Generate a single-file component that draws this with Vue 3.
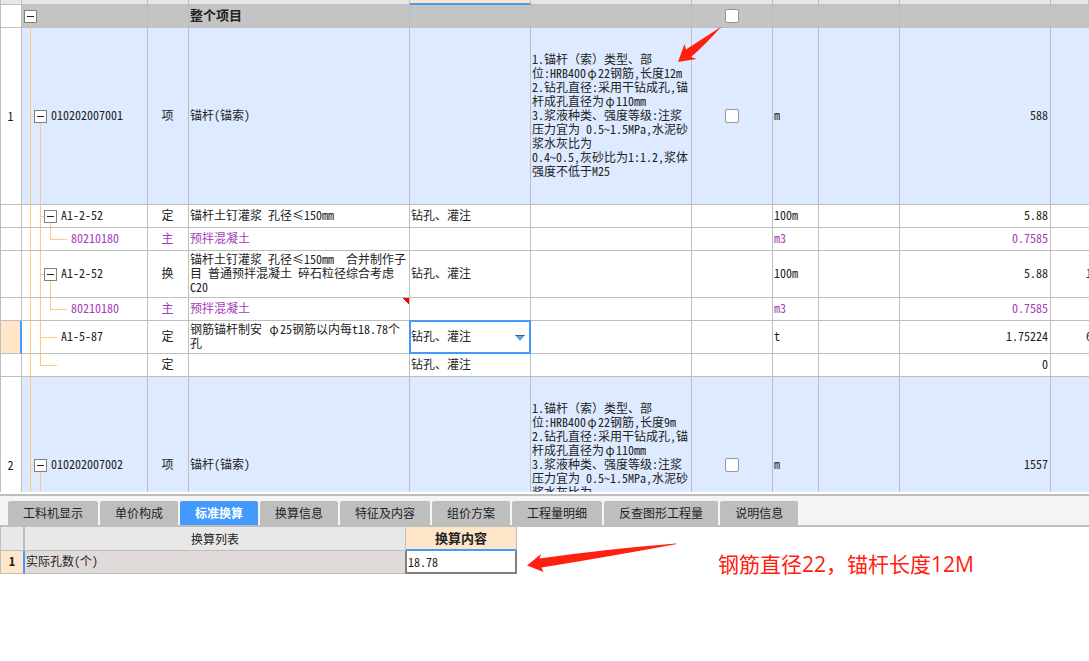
<script setup>
import { ref } from 'vue'

const spec = (length) => [
  '1.锚杆（索）类型、部',
  `位:HRB400φ22钢筋,长度${length}m`,
  '2.钻孔直径:采用干钻成孔,锚',
  '杆成孔直径为φ110mm',
  '3.浆液种类、强度等级:注浆',
  '压力宜为 0.5~1.5MPa,水泥砂',
  '浆水灰比为',
  '0.4~0.5,灰砂比为1:1.2,浆体',
  '强度不低于M25'
].join('\n')

const rows = [
  { kind: 'root', toggle: true, name: '整个项目', check: true },
  { kind: 'item', index: '1', toggle: true, code: '010202007001', type: '项', name: '锚杆(锚索)', desc: spec(12), check: true, unit: 'm', qty: '588' },
  { kind: 'group', toggle: true, code: 'A1-2-52', type: '定', name: '锚杆土钉灌浆 孔径≤150mm', work: '钻孔、灌注', unit: '100m', qty: '5.88' },
  { kind: 'sub', code: '80210180', type: '主', name: '预拌混凝土', unit: 'm3', qty: '0.7585' },
  { kind: 'group', toggle: true, code: 'A1-2-52', type: '换', name: '锚杆土钉灌浆 孔径≤150mm  合并制作子\n目 普通预拌混凝土 碎石粒径综合考虑\nC20', work: '钻孔、灌注', unit: '100m', qty: '5.88', extra: '1' },
  { kind: 'sub', code: '80210180', type: '主', name: '预拌混凝土', unit: 'm3', qty: '0.7585', flag: true },
  { kind: 'leaf', code: 'A1-5-87', type: '定', name: '钢筋锚杆制安 φ25钢筋以内每t18.78个\n孔', edit: true, unit: 't', qty: '1.75224', extra: '6' },
  { kind: 'leaf end', code: '', type: '定', name: '', work: '钻孔、灌注', qty: '0' },
  { kind: 'item', index: '2', toggle: true, code: '010202007002', type: '项', name: '锚杆(锚索)', desc: spec(9), check: true, unit: 'm', qty: '1557' }
]

// The diameter sign takes a full character cell, so it is set apart from the half-width text.
const parts = (text) => (text || '').split(/(φ)/)

const tabs = ['工料机显示', '单价构成', '标准换算', '换算信息', '特征及内容', '组价方案', '工程量明细', '反查图形工程量', '说明信息']
const active = ref('标准换算')
const work = ref('钻孔、灌注')
const holes = ref('18.78')
</script>

<template>
  <main class="app">
    <section class="list">
      <table class="grid">
        <colgroup>
          <col class="c-index"><col class="c-code"><col class="c-type"><col class="c-name"><col class="c-work">
          <col class="c-desc"><col class="c-check"><col class="c-unit"><col class="c-expr"><col class="c-qty"><col>
        </colgroup>
        <thead>
          <tr>
            <th v-for="n in 11" :key="n" :class="{ current: n === 5 }"></th>
          </tr>
        </thead>
        <tbody>
          <tr v-for="(row, i) in rows" :key="i" :class="row.kind">
            <td class="index" :class="{ marked: row.edit }">{{ row.index }}</td>
            <td class="code">
              <div class="node">
                <button v-if="row.toggle" type="button" class="toggle" aria-label="折叠">
                  <svg viewBox="0 0 11 11" width="11" height="11"><path d="M2 5h7v1H2z" fill="#222" /></svg>
                </button>
                <span class="code-text">{{ row.code }}</span>
              </div>
            </td>
            <td class="type">{{ row.type }}</td>
            <td class="name" :class="{ flagged: row.flag }"><span v-for="(part, p) in parts(row.name)" :key="p" :class="{ wide: part === 'φ' }">{{ part }}</span></td>
            <td class="work">
              <template v-if="row.edit">
                <select v-model="work" class="picker" aria-label="工作内容">
                  <option>钻孔、灌注</option>
                </select>
                <svg class="caret" viewBox="0 0 10 6" width="10" height="6">
                  <path d="M0 0h10L5 6z" fill="#5fa6dc" /><path d="M0 0h10L9 1H1z" fill="#2b6597" />
                </svg>
              </template>
              <template v-else>{{ row.work }}</template>
            </td>
            <td class="desc"><span v-for="(part, p) in parts(row.desc)" :key="p" :class="{ wide: part === 'φ' }">{{ part }}</span></td>
            <td class="check"><input v-if="row.check" type="checkbox" aria-label="选择"></td>
            <td>{{ row.unit }}</td>
            <td></td>
            <td class="qty">{{ row.qty }}</td>
            <td class="extra">{{ row.extra }}</td>
          </tr>
        </tbody>
      </table>
      <svg class="arrow first" viewBox="0 0 46 38" width="46" height="38">
        <path d="M44.5 0.5L9 23.5L7.5 18L1 36L19.5 33L14 31Q26 21 44.5 0.5Z" fill="#ff2010" />
      </svg>
    </section>

    <section class="detail">
      <nav class="tabs" role="tablist">
        <button
          v-for="tab in tabs" :key="tab" type="button" role="tab"
          :class="{ active: tab === active }" :aria-selected="tab === active"
          @click="active = tab"
        >{{ tab }}</button>
      </nav>
      <div class="panel">
        <table class="convert">
          <colgroup><col class="v-index"><col class="v-list"><col class="v-value"></colgroup>
          <thead>
            <tr><th></th><th>换算列表</th><th class="current">换算内容</th></tr>
          </thead>
          <tbody>
            <tr>
              <td class="number">1</td>
              <td class="label"><label for="holes">实际孔数(个)</label></td>
              <td class="value"><input id="holes" v-model="holes" type="text"></td>
            </tr>
          </tbody>
        </table>
        <svg class="arrow second" viewBox="0 0 150 30" width="150" height="30">
          <path d="M150 1L149 0.5Q80 6 12.5 15.5L14 11L0 22.5L16.5 29L14.5 24.5Q80 14 150 1Z" fill="#ff2010" />
        </svg>
        <p class="note">钢筋直径22，锚杆长度12M</p>
      </div>
    </section>
  </main>
</template>

<style>
body {
  margin: 0;
  background: #fff;
}
</style>

<style scoped>
.app {
  display: flex;
  flex-direction: column;
  height: 100vh;
  overflow: hidden;
  color: #222;
  font: 12px/14px "Noto Sans Mono CJK SC", "Liberation Mono", "Noto Sans CJK SC", monospace;
}
button, input, select {
  box-sizing: border-box;
  margin: 0;
  padding: 0;
  font: inherit;
  color: inherit;
}
table {
  border-collapse: separate;
  border-spacing: 0;
  table-layout: fixed;
}
.list {
  position: relative;
  flex: 1;
  min-height: 0;
  overflow: hidden;
}
.grid {
  width: 100%;
  border-left: 1px solid #bebebe;
}
.c-index { width: 21px; }
.c-code { width: 126px; }
.c-type { width: 41px; }
.c-name { width: 221px; }
.c-work { width: 121px; }
.c-desc { width: 161px; }
.c-check { width: 81px; }
.c-unit { width: 46px; }
.c-expr { width: 81px; }
.c-qty { width: 151px; }
.grid th {
  height: 4px;
  padding: 0;
  background: #e7e7e7;
  border-right: 1px solid #bebebe;
  border-bottom: 1px solid #bebebe;
}
.grid th.current {
  height: 3px;
  background: #ffe6c8;
  border-bottom: 2px solid #4499ff;
}
.grid td {
  box-sizing: border-box;
  height: 23px;
  padding: 1px 2px 3px 1px;
  border-right: 1px solid #bebebe;
  border-bottom: 1px solid #bebebe;
  white-space: pre;
  vertical-align: middle;
}
.wide {
  display: inline-block;
  width: 12px;
  text-align: center;
}
.grid .root td { background-color: #c4c4c4; }
.grid .item td { background-color: #deeaff; }
.grid td.index, .grid .root td.index {
  padding: 2px 1px 2px 0;
  text-align: center;
  background-color: #fff;
}
.grid td.marked {
  background-color: #ffe6c8;
  border-right: 2px solid #4499ff;
}
.grid .item .desc { padding: 24px 1px 26px; }
.grid .type, .grid .check { text-align: center; }
.grid td.check { padding: 2px; }
.grid .qty { text-align: right; }
.grid .extra {
  padding-left: 35px;
  border-right: 0;
  overflow: hidden;
}
.root .name {
  font-size: 13px;
  font-weight: 700;
}
.sub { color: #a63db8; }
.flagged {
  background: linear-gradient(to bottom left, #f00 50%, transparent 50%) right top / 7px 6px no-repeat;
}

/* Tree guides */
.grid .code {
  --g: linear-gradient(#ffca80, #ffca80);
  padding: 0;
  background-repeat: no-repeat;
}
.root .code {
  background-image: var(--g);
  background-position: 8px 100%;
  background-size: 1px 50%;
}
.item .code {
  background-image: var(--g), var(--g), var(--g);
  background-position: 8px 0, 8px 50%, 18px 100%;
  background-size: 1px 100%, 4px 1px, 1px 50%;
}
.group .code {
  background-image: var(--g), var(--g), var(--g), var(--g);
  background-position: 8px 0, 18px 0, 18px 50%, 28px 100%;
  background-size: 1px 100%, 1px 100%, 4px 1px, 1px 50%;
}
.sub .code {
  background-image: var(--g), var(--g), var(--g), var(--g);
  background-position: 8px 0, 18px 0, 28px 0, 28px 50%;
  background-size: 1px 100%, 1px 100%, 1px 50%, 17px 1px;
}
.leaf .code {
  background-image: var(--g), var(--g), var(--g);
  background-position: 8px 0, 18px 0, 18px 50%;
  background-size: 1px 100%, 1px 100%, 17px 1px;
}
.leaf.end .code { background-size: 1px 100%, 1px 50%, 17px 1px; }
.node {
  display: flex;
  align-items: center;
  gap: 4px;
}
.code-text { padding-bottom: 2px; }
.root .node { padding-left: 2px; }
.item .node { padding-left: 12px; }
.group .node { padding-left: 22px; }
.leaf .node { padding-left: 39px; }
.sub .node { padding-left: 49px; }
.toggle {
  display: flex;
  width: 13px;
  height: 13px;
  border: 1px solid #808080;
  background: #fff;
}
.check input {
  display: block;
  width: 14px;
  height: 14px;
  margin: 0 auto;
  appearance: none;
  background: #fff;
  border: 1px solid #979797;
  border-radius: 2px;
}
.work { position: relative; }
.picker {
  position: absolute;
  inset: -1px;
  width: calc(100% + 2px);
  height: calc(100% + 2px);
  padding-bottom: 2px;
  appearance: none;
  background: #fff;
  border: 2px solid #4499ff;
  border-radius: 0;
}
.caret {
  position: absolute;
  right: 5px;
  top: 14px;
  pointer-events: none;
}
.arrow {
  position: absolute;
  pointer-events: none;
}
.first {
  left: 677px;
  top: 26px;
}

.detail {
  flex: 0 0 167px;
  margin-top: 2px;
  border-top: 2px solid #bebebe;
  box-sizing: border-box;
}
.tabs {
  display: flex;
  gap: 2px;
  padding: 5px 8px 0;
  background: #f4f4f4;
  border-bottom: 2px solid #bebebe;
}
.tabs button {
  height: 24px;
  padding: 0 15px;
  border: 0;
  border-radius: 2px 2px 0 0;
  background: #bebebe;
  font-family: "Noto Sans CJK SC", sans-serif;
  white-space: nowrap;
}
.tabs .active {
  background: #4499ff;
  color: #fff;
  font-weight: 700;
}
.panel { position: relative; }
.convert {
  width: 517px;
  border-left: 1px solid #bebebe;
}
.v-index { width: 24px; }
.v-list { width: 381px; }
.v-value { width: 111px; }
.convert th {
  box-sizing: border-box;
  height: 24px;
  padding: 0;
  background: #e8e8e8;
  border-right: 1px solid #bebebe;
  border-bottom: 1px solid #bebebe;
  font-weight: 400;
}
.convert th:first-child { border-right-width: 2px; }
.convert th.current {
  background: #ffe6c8;
  border-bottom: 2px solid #4499ff;
  font-size: 13px;
  font-weight: 700;
}
.convert td {
  box-sizing: border-box;
  height: 23px;
  padding: 0 0 2px;
  border-bottom: 1px solid #bebebe;
}
.convert .number {
  background: #ffe6c8;
  border-right: 2px solid #4499ff;
  text-align: center;
  font-weight: 700;
}
.convert .label {
  padding-left: 1px;
  background: #e0dbd8;
}
.convert .value {
  padding: 0;
  border: 0;
}
.value input {
  display: block;
  width: calc(100% + 1px);
  height: 23px;
  margin-left: -1px;
  padding: 0 0 1px 1px;
  border: 2px solid #808080;
  border-top: 0;
  border-radius: 0;
  background: #fff;
  outline: 0;
}
.second {
  left: 527px;
  top: 16px;
}
.note {
  position: absolute;
  left: 718px;
  top: 22px;
  margin: 0;
  color: #ff2010;
  font: 21px/30px "Open Sans", "Noto Sans CJK SC", sans-serif;
  white-space: nowrap;
}
</style>
